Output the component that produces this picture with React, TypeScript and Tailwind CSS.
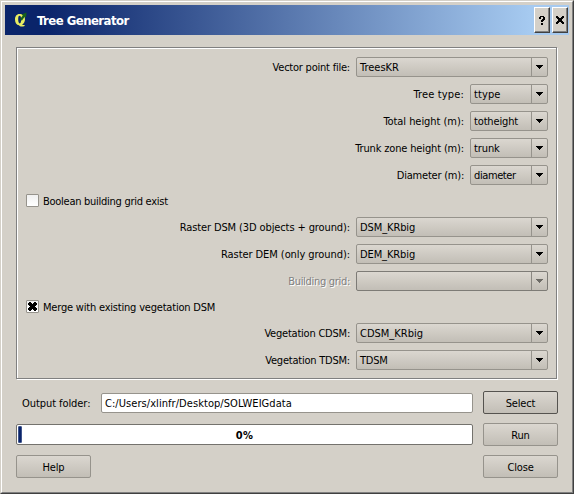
import type { ReactNode } from 'react';

function Txt({ children, className = '', track = 'tracking-[-0.22px]' }: { children: ReactNode; className?: string; track?: string }) {
  return <span className={`whitespace-pre pt-[2px] text-[11px] leading-[14px] ${track} ${className}`}>{children}</span>;
}

function Arrow({ disabled = false }: { disabled?: boolean }) {
  return (
    <svg width="7" height="4" viewBox="0 0 7 4" shapeRendering="crispEdges" fill={disabled ? '#6d6b66' : '#000'}>
      <path d="M0 0h7v1H6v1H5v1H4v1H3V3H2V2H1V1H0z" />
    </svg>
  );
}

function Combo({ value, small = false, disabled = false, track }: { value: string; small?: boolean; disabled?: boolean; track?: string }) {
  return (
    <div
      className={`flex h-5 shrink-0 rounded-[2px] border bg-linear-to-b from-[#dbd7d0] to-[#c2beb6] ${small ? 'w-[78px]' : 'w-48'} ${disabled ? 'border-[#7d7b76]' : 'border-[#96938c]'}`}
    >
      <div className="flex min-w-0 flex-1 items-center pl-[3px]">
        <Txt track={track}>{value}</Txt>
      </div>
      <div className={`flex w-4 items-center justify-center border-l pb-px ${disabled ? 'border-[#8b8882]' : 'border-[#96938c]'}`}>
        <Arrow disabled={disabled} />
      </div>
    </div>
  );
}

type RowProps = { label: string; value: string; small?: boolean; disabled?: boolean; track?: string; valueTrack?: string };

function Row({ label, value, small, disabled, track, valueTrack }: RowProps) {
  return (
    <div className="flex h-5 items-center justify-end gap-[6px]">
      <Txt track={track} className={disabled ? 'text-[#808080] [text-shadow:1px_1px_0_#fff]' : ''}>{label}</Txt>
      <Combo value={value} small={small} disabled={disabled} track={valueTrack} />
    </div>
  );
}

function Check({ label, checked = false, track }: { label: string; checked?: boolean; track?: string }) {
  return (
    <div className="flex h-[13px] items-center gap-1">
      <div className="flex size-[13px] items-center justify-center rounded-[1px] border border-[#96938c] bg-linear-to-b from-[#f0f0f0] to-white">
        {checked && (
          <svg width="9" height="9" viewBox="0 0 9 9" shapeRendering="crispEdges">
            <path d="M1 0h2v1h1v1h1V1h1V0h2v1h1v2H8v1H7v1h1v1h1v2H8v1H6V8H5V7H4v1H3v1H1V8H0V6h1V5h1V4H1V3H0V1h1z" />
          </svg>
        )}
      </div>
      <Txt track={track}>{label}</Txt>
    </div>
  );
}

function Button({ children, focus = false }: { children: ReactNode; focus?: boolean }) {
  return (
    <button
      className={`flex h-[23px] w-[75px] shrink-0 items-center justify-center rounded-[2px] border bg-linear-to-b from-[#dbd7d0] to-[#c2beb6] ${focus ? 'border-[#55534f]' : 'border-[#96938c]'}`}
    >
      <Txt track="tracking-[-0.15px]">{children}</Txt>
    </button>
  );
}

function TitleButton({ children }: { children: ReactNode }) {
  return (
    <button className="flex h-[26px] w-4 items-center justify-center border border-t-white border-r-[#404040] border-b-[#404040] border-l-white bg-[#d4d0c8] shadow-[inset_-1px_-1px_0_#808080]">
      {children}
    </button>
  );
}

export default function App() {
  return (
    <div className="h-[494px] w-[574px] border border-t-[#d4d0c8] border-r-[#404040] border-b-[#404040] border-l-[#d4d0c8] bg-[#d4d0c8] font-['DejaVu_Sans_Condensed','DejaVu_Sans',sans-serif] text-black [font-stretch:condensed]">
      <div className="h-full border border-t-white border-r-[#808080] border-b-[#808080] border-l-white p-[3px]">
        <header className="flex h-[30px] items-center bg-[linear-gradient(to_right,#0a246a_0px,#0a246a_40px,#a6caf0_525px)] pr-px pl-[9px]">
          <svg width="14" height="16" viewBox="0 0 14 16">
            <path fill="#e9ec62" fillRule="evenodd" d="M5.500 2C2.500 2 1 4.400 1 7.500s1.500 5.500 4 5.700c.6 1.300 2.500 1.900 5.600.9V13c-1.200.2-2 0-2.400-.6C10.200 11.500 11 9.500 11 7.300 11 4 8.500 2 5.500 2zM5.500 3.700c1.300 0 1.600 1.700 1.600 3.900S6.800 11.400 5.800 11.400 4.200 9.700 4.200 7.500s.3-3.800 1.300-3.800z" />
            <path fill="#17611b" d="M6 7 8.800 3.400 7.600 2.400 12.500.500 12 5.500 10.700 4.700 7.800 8.700z" />
          </svg>
          <span className="ml-[9px] flex-1 whitespace-pre pt-px text-[13px] leading-4 font-bold tracking-[-0.52px] text-white">Tree Generator</span>
          <div className="flex gap-[2px]">
            <TitleButton>
              <svg width="6" height="9" viewBox="0 0 6 9" shapeRendering="crispEdges">
                <path d="M1 0h4v1h1v3H5v1H4v1H2V4h1V3h1V1H2v2H0V1h1zM2 7h2v2H2z" />
              </svg>
            </TitleButton>
            <TitleButton>
              <svg width="8" height="8" viewBox="0 0 8 8" shapeRendering="crispEdges">
                <path d="M0 0h2v1h1v1h2V1h1V0h2v2H7v1H6v2h1v1h1v2H6V7H5V6H3v1H2v1H0V6h1V5h1V3H1V2H0z" />
              </svg>
            </TitleButton>
          </div>
        </header>

        <main className="px-[11px] pt-3">
          <section className="h-[332px] w-[541px] border border-[#808080] pt-[9px] pr-2 pl-[9px] shadow-[1px_1px_0_#fff,inset_1px_1px_0_#fff]">
            <div className="flex flex-col gap-[7px]">
              <Row label="Vector point file:" value="TreesKR" valueTrack="tracking-[0px]" />
              <Row label="Tree type:" value="ttype" small track="tracking-[0.15px]" valueTrack="tracking-[0.1px]" />
              <Row label="Total height (m):" value="totheight" small track="tracking-[-0.05px]" valueTrack="tracking-[-0.15px]" />
              <Row label="Trunk zone height (m):" value="trunk" small track="tracking-[-0.15px]" valueTrack="tracking-[-0.1px]" />
              <Row label="Diameter (m):" value="diameter" small valueTrack="tracking-[-0.4px]" />
            </div>
            <div className="pt-[9px] pb-[10px]">
              <Check label="Boolean building grid exist" track="tracking-[-0.27px]" />
            </div>
            <div className="flex flex-col gap-[7px]">
              <Row label="Raster DSM (3D objects + ground):" value="DSM_KRbig" track="tracking-[-0.11px]" valueTrack="tracking-[-0.1px]" />
              <Row label="Raster DEM (only ground):" value="DEM_KRbig" track="tracking-[-0.07px]" valueTrack="tracking-[-0.1px]" />
              <Row label="Building grid:" value="" disabled track="tracking-[-0.3px]" />
            </div>
            <div className="pt-[9px] pb-[10px]">
              <Check label="Merge with existing vegetation DSM" checked track="tracking-[-0.2px]" />
            </div>
            <div className="flex flex-col gap-[7px]">
              <Row label="Vegetation CDSM:" value="CDSM_KRbig" valueTrack="tracking-[0px]" />
              <Row label="Vegetation TDSM:" value="TDSM" />
            </div>
          </section>

          <div className="mt-3 flex h-[23px] w-[542px] items-center">
            <Txt className="w-[85px] pl-[6px]" track="tracking-[-0.07px]">Output folder:</Txt>
            <div className="mr-[10px] flex h-5 flex-1 items-center rounded-[2px] border border-[#96938c] bg-white pl-[3px]">
              <Txt track="tracking-[0.06px]">C:/Users/xlinfr/Desktop/SOLWEIGdata</Txt>
            </div>
            <Button focus>Select</Button>
          </div>

          <div className="mt-[9px] flex h-[23px] w-[542px] items-center">
            <div className="mr-[10px] grid h-[21px] flex-1 items-center rounded-[2px] border border-[#74726d] bg-white px-px">
              <div className="col-start-1 row-start-1 h-[17px] w-1 rounded-[1px] border border-[#40558c] bg-[#0a246a]" />
              <Txt className="col-start-1 row-start-1 text-center font-bold" track="tracking-[0.3px]">0%</Txt>
            </div>
            <Button>Run</Button>
          </div>

          <div className="mt-[9px] flex w-[542px] justify-between">
            <Button>Help</Button>
            <Button>Close</Button>
          </div>
        </main>
      </div>
    </div>
  );
}
